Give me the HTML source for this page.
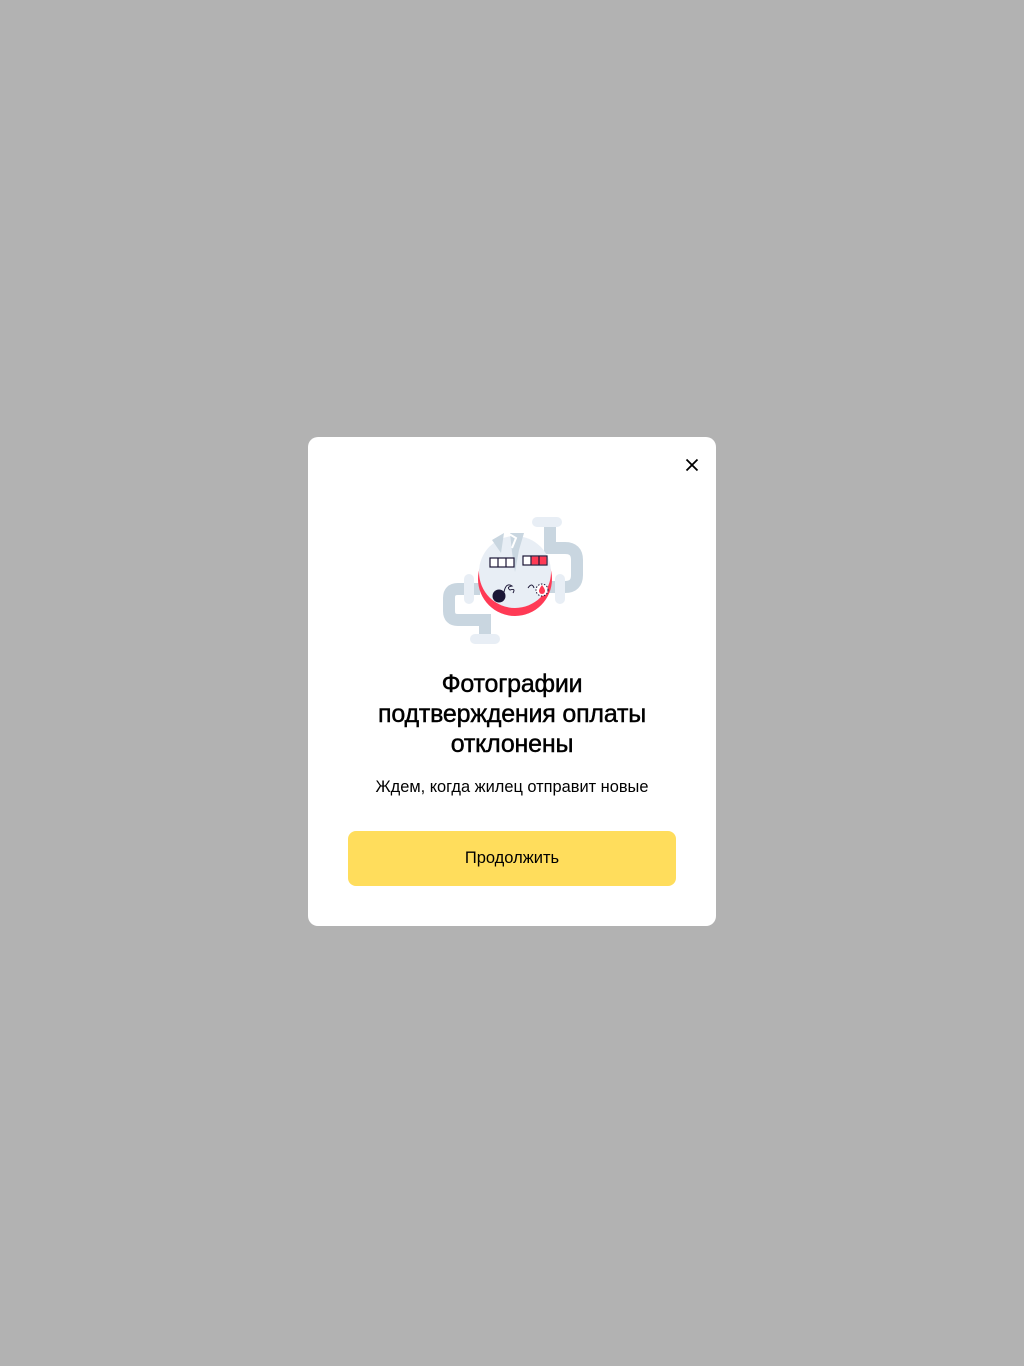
<!DOCTYPE html>
<html><head><meta charset="utf-8"><style>
html,body{margin:0;padding:0}
body{width:1024px;height:1366px;background:#b2b2b2;position:relative;font-family:"Liberation Sans",sans-serif;overflow:hidden}
.modal{position:absolute;left:308px;top:437px;width:408px;height:489px;background:#fff;border-radius:10px}
.close{position:absolute;left:377px;top:21px}
h1{position:absolute;left:0;right:0;top:232px;margin:0;text-align:center;font-size:25px;line-height:30px;font-weight:normal;color:#000;-webkit-text-stroke:0.45px #000;letter-spacing:-0.2px}
.sub{position:absolute;left:0;right:0;top:341px;text-align:center;font-size:16.4px;color:#000}
.btn{position:absolute;left:40px;top:394px;width:328px;height:55px;background:#ffdd5c;border-radius:8px;text-align:center;line-height:55px;font-size:16.5px;color:#000}
svg.ill{position:absolute;left:122px;top:68px}
</style></head><body>
<div class="modal">
<svg class="close" width="14" height="14" viewBox="0 0 14 14"><path d="M1.5 1.5L12.5 12.5M12.5 1.5L1.5 12.5" stroke="#000" stroke-width="1.8"/></svg>
<svg class="ill" width="170" height="150" viewBox="430 505 170 150">
<g fill="none" stroke="#c9d6e0" stroke-width="12">
<path d="M550 522 V548 H565 Q577 548 577 560 V575 Q577 587 565 587 H540"/>
<path d="M485 638 V620 H458 Q449 620 449 611 V598 Q449 589 458 589 H480"/>
</g>
<g fill="#e8eef5">
<rect x="532" y="517" width="30" height="10" rx="5"/>
<rect x="470" y="634" width="30" height="10" rx="5"/>
<rect x="464" y="574" width="10" height="30" rx="5"/>
<rect x="555" y="574" width="10" height="30" rx="5"/>
</g>
<circle cx="515" cy="579" r="37" fill="#ff3a55"/>
<circle cx="515" cy="572" r="36" fill="#e8eef5"/>
<path d="M492 540 L501 553 L504 533 Z M510 533 L524 533 L519 550 L515 572 L512 552 Z" fill="#c9d6e0"/>
<path d="M504 531 L516 538 L512 548" stroke="#fff" stroke-width="2" fill="none"/>
<g stroke="#1a1535" stroke-width="1.2" fill="#fff">
<rect x="490" y="558" width="24" height="9"/>
<path d="M498 558V567M506 558V567"/>
<rect x="523" y="556" width="24" height="9"/>
</g>
<rect x="531.6" y="556.6" width="14.8" height="7.8" fill="#ff3a55"/>
<path d="M531 556V565M539 556V565" stroke="#1a1535" stroke-width="1.2"/>
<circle cx="499" cy="596" r="6.5" fill="#1a1535"/>
<path d="M504 592 q2 -10 8 -6 q-6 1 -2 4 q6 -2 3 3" stroke="#1a1535" fill="none" stroke-width="1"/>
<path d="M528 588 q4 -6 6 0" stroke="#1a1535" fill="none" stroke-width="1"/>
<circle cx="542" cy="590" r="6" fill="#fff" stroke="#1a1535" stroke-dasharray="1.5 1.5"/>
<path d="M542 585 q-3 4 -3 6 a3 3 0 0 0 6 0 q0 -2 -3 -6" fill="#ff3a55"/>
</svg>
<h1>Фотографии<br>подтверждения оплаты<br>отклонены</h1>
<div class="sub">Ждем, когда жилец отправит новые</div>
<div class="btn">Продолжить</div>
</div>
</body></html>
